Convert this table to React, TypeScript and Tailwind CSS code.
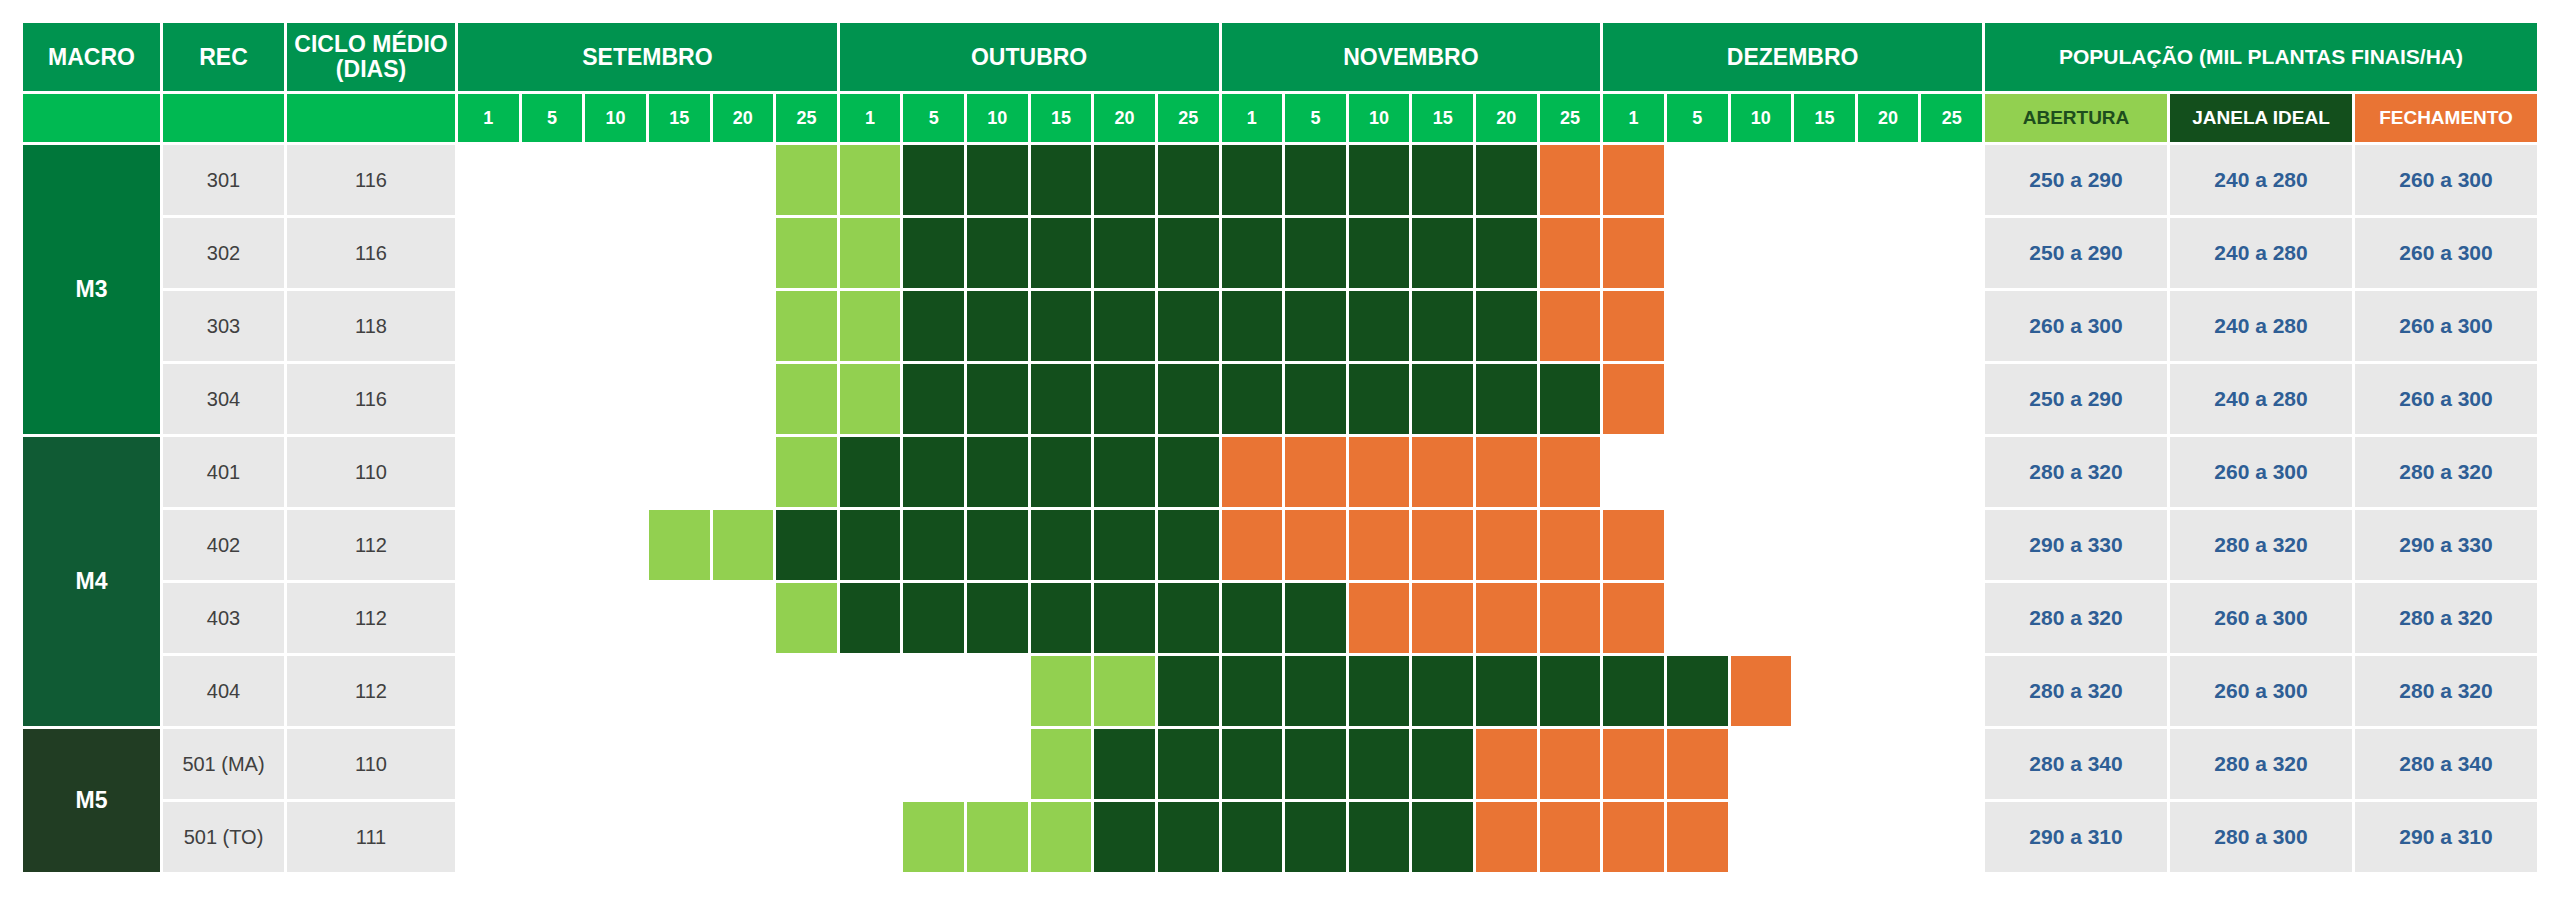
import React from "react";

type Row = {
  rec: string;
  ciclo: string;
  lg: [number, number];
  dg: [number, number];
  or: [number, number];
  pop: [string, string, string];
};

const groups: { macro: string; color: string; rows: Row[] }[] = [
  {
    macro: "M3",
    color: "bg-[#00773a]",
    rows: [
      { rec: "301", ciclo: "116", lg: [5, 6], dg: [7, 16], or: [17, 18], pop: ["250 a 290", "240 a 280", "260 a 300"] },
      { rec: "302", ciclo: "116", lg: [5, 6], dg: [7, 16], or: [17, 18], pop: ["250 a 290", "240 a 280", "260 a 300"] },
      { rec: "303", ciclo: "118", lg: [5, 6], dg: [7, 16], or: [17, 18], pop: ["260 a 300", "240 a 280", "260 a 300"] },
      { rec: "304", ciclo: "116", lg: [5, 6], dg: [7, 17], or: [18, 18], pop: ["250 a 290", "240 a 280", "260 a 300"] },
    ],
  },
  {
    macro: "M4",
    color: "bg-[#105b34]",
    rows: [
      { rec: "401", ciclo: "110", lg: [5, 5], dg: [6, 11], or: [12, 17], pop: ["280 a 320", "260 a 300", "280 a 320"] },
      { rec: "402", ciclo: "112", lg: [3, 4], dg: [5, 11], or: [12, 18], pop: ["290 a 330", "280 a 320", "290 a 330"] },
      { rec: "403", ciclo: "112", lg: [5, 5], dg: [6, 13], or: [14, 18], pop: ["280 a 320", "260 a 300", "280 a 320"] },
      { rec: "404", ciclo: "112", lg: [9, 10], dg: [11, 19], or: [20, 20], pop: ["280 a 320", "260 a 300", "280 a 320"] },
    ],
  },
  {
    macro: "M5",
    color: "bg-[#213d23]",
    rows: [
      { rec: "501 (MA)", ciclo: "110", lg: [9, 9], dg: [10, 15], or: [16, 19], pop: ["280 a 340", "280 a 320", "280 a 340"] },
      { rec: "501 (TO)", ciclo: "111", lg: [7, 9], dg: [10, 15], or: [16, 19], pop: ["290 a 310", "280 a 300", "290 a 310"] },
    ],
  },
];

const months = ["SETEMBRO", "OUTUBRO", "NOVEMBRO", "DEZEMBRO"];
const days = ["1", "5", "10", "15", "20", "25"];

const inRange = (i: number, r: [number, number]) => i >= r[0] && i <= r[1];

function cellColor(row: Row, i: number) {
  if (inRange(i, row.lg)) return "bg-[#92d050]";
  if (inRange(i, row.dg)) return "bg-[#134f1c]";
  if (inRange(i, row.or)) return "bg-[#e97434]";
  return "bg-white";
}

const head = "flex items-center justify-center text-center bg-[#00934f] text-white font-bold";
const sub = "flex items-center justify-center bg-[#00b952] text-white font-bold text-[18px]";
const body = "flex items-center justify-center bg-[#e8e8e8] text-[#404040] text-[20px]";
const pop = "flex items-center justify-center bg-[#e8e8e8] text-[#2e5e95] font-bold text-[21px]";

export default function App() {
  return (
    <div className="w-[2560px] h-[897px] bg-white px-[23px] pt-[23px] font-['Liberation_Sans',Arial,sans-serif]">
      <div className="grid grid-cols-[137px_121px_168px_repeat(24,minmax(0,1fr))_repeat(3,182px)] grid-rows-[68px_48px_repeat(10,70px)] gap-[3px]">
        <div className={`${head} text-[23px]`}>MACRO</div>
        <div className={`${head} text-[23px]`}>REC</div>
        <div className={`${head} text-[23px] leading-[25px]`}>
          CICLO MÉDIO
          <br />
          (DIAS)
        </div>
        {months.map((m) => (
          <div key={m} className={`${head} text-[23px] col-span-6`}>
            {m}
          </div>
        ))}
        <div className={`${head} text-[21px] col-span-3`}>POPULAÇÃO (MIL PLANTAS FINAIS/HA)</div>

        <div className={sub} />
        <div className={sub} />
        <div className={sub} />
        {months.map((m) =>
          days.map((d) => (
            <div key={m + d} className={sub}>
              {d}
            </div>
          ))
        )}
        <div className="flex items-center justify-center bg-[#92d050] text-[#1d4d1d] font-bold text-[19px]">ABERTURA</div>
        <div className="flex items-center justify-center bg-[#134f1c] text-white font-bold text-[19px]">JANELA IDEAL</div>
        <div className="flex items-center justify-center bg-[#e97434] text-white font-bold text-[19px]">FECHAMENTO</div>

        {groups.map((g) => (
          <React.Fragment key={g.macro}>
            {g.rows.map((r, ri) => (
              <React.Fragment key={r.rec}>
                {ri === 0 && (
                  <div
                    className={`${g.color} flex items-center justify-center text-white font-bold text-[23px] ${
                      g.rows.length === 4 ? "row-span-4" : "row-span-2"
                    }`}
                  >
                    {g.macro}
                  </div>
                )}
                <div className={`${body} col-start-2`}>{r.rec}</div>
                <div className={body}>{r.ciclo}</div>
                {Array.from({ length: 24 }, (_, i) => (
                  <div key={i} className={cellColor(r, i)} />
                ))}
                {r.pop.map((p, pi) => (
                  <div key={pi} className={pop}>
                    {p}
                  </div>
                ))}
              </React.Fragment>
            ))}
          </React.Fragment>
        ))}
      </div>
    </div>
  );
}
